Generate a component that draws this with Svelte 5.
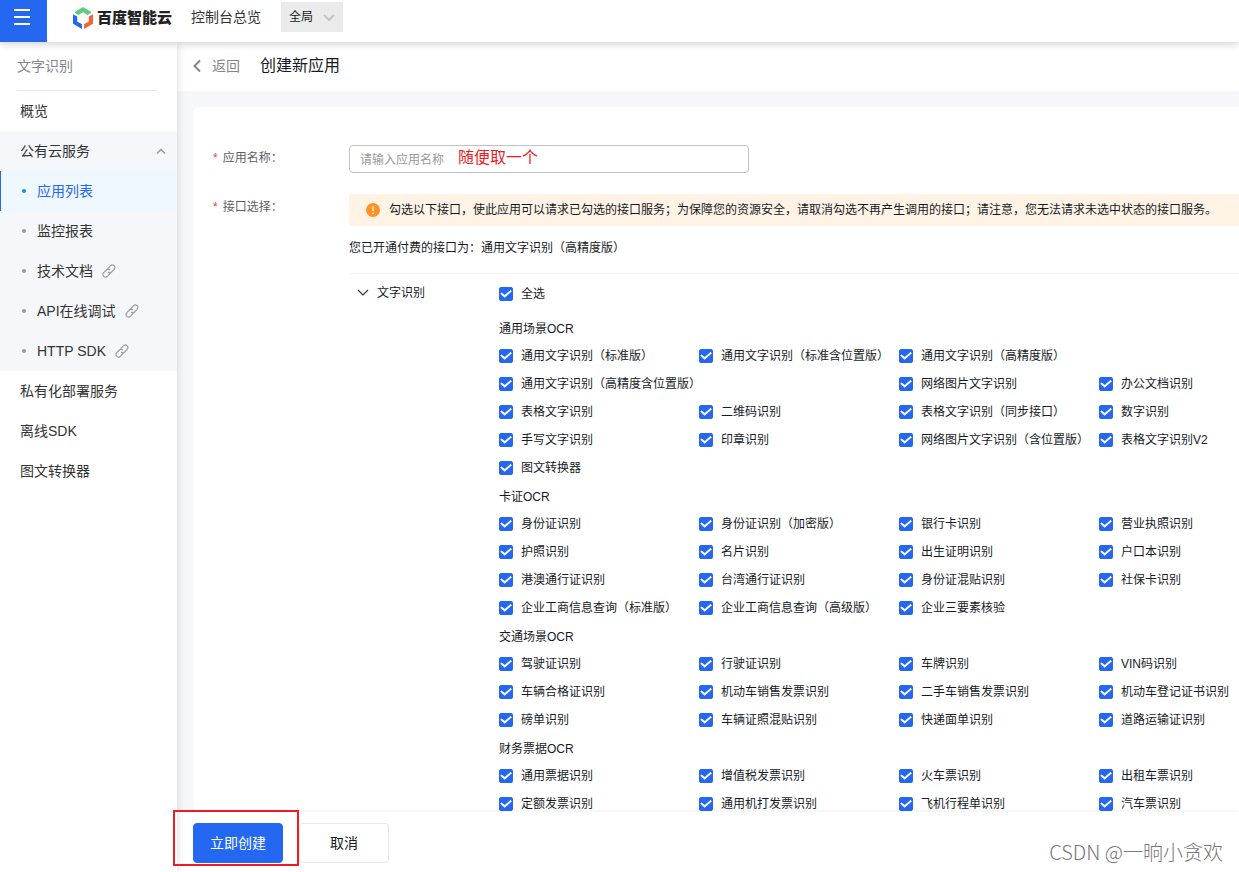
<script lang="ts">
  type Entry = { label: string; wide?: boolean };
  type Group = { title: string; entries: Entry[] };

  // Labels of 15 characters and more take two columns
  function entries(labels: string[]): Entry[] {
    return labels.map((label) => ({ label, wide: label.length > 14 }));
  }

  const groups: Group[] = [
    {
      title: '通用场景OCR',
      entries: entries([
        '通用文字识别（标准版）', '通用文字识别（标准含位置版）', '通用文字识别（高精度版）',
        '通用文字识别（高精度含位置版）', '网络图片文字识别', '办公文档识别',
        '表格文字识别', '二维码识别', '表格文字识别（同步接口）', '数字识别',
        '手写文字识别', '印章识别', '网络图片文字识别（含位置版）', '表格文字识别V2',
        '图文转换器',
      ]),
    },
    {
      title: '卡证OCR',
      entries: entries([
        '身份证识别', '身份证识别（加密版）', '银行卡识别', '营业执照识别',
        '护照识别', '名片识别', '出生证明识别', '户口本识别',
        '港澳通行证识别', '台湾通行证识别', '身份证混贴识别', '社保卡识别',
        '企业工商信息查询（标准版）', '企业工商信息查询（高级版）', '企业三要素核验',
      ]),
    },
    {
      title: '交通场景OCR',
      entries: entries([
        '驾驶证识别', '行驶证识别', '车牌识别', 'VIN码识别',
        '车辆合格证识别', '机动车销售发票识别', '二手车销售发票识别', '机动车登记证书识别',
        '磅单识别', '车辆证照混贴识别', '快递面单识别', '道路运输证识别',
      ]),
    },
    {
      title: '财务票据OCR',
      entries: entries([
        '通用票据识别', '增值税发票识别', '火车票识别', '出租车票识别',
        '定额发票识别', '通用机打发票识别', '飞机行程单识别', '汽车票识别',
      ]),
    },
  ];

  const subItems = [
    { label: '应用列表', active: true, link: false },
    { label: '监控报表', active: false, link: false },
    { label: '技术文档', active: false, link: true },
    { label: 'API在线调试', active: false, link: true },
    { label: 'HTTP SDK', active: false, link: true },
  ];
</script>

<div class="console">
  <header class="topbar">
    <button class="menu-btn" aria-label="菜单">
      <svg width="18" height="18" viewBox="0 0 18 18">
        <path d="M1 2h16M1 9h16M1 16h16" stroke="#fff" stroke-width="2" />
      </svg>
    </button>
    <a class="brand" href="#home">
      <svg width="20" height="22" viewBox="0 0 20 22">
        <path d="M2 4.8 10 0l8 4.8V6l-3.5 2L10 5.2 5.5 8 2 6z" fill="#5fcb83" />
        <path d="M0 7.2l4.2 2.3v5L9 17.3V22l-9-5.2z" fill="#2468f2" />
        <path d="M20 7.2l-4.2 2.3v5L11 17.3V22l9-5.2z" fill="#f2633a" />
      </svg>
      <span>百度智能云</span>
    </a>
    <a class="overview" href="#overview">控制台总览</a>
    <div class="region">
      <select aria-label="区域">
        <option>全局</option>
      </select>
      <svg width="12" height="8" viewBox="0 0 12 8">
        <path d="M1 1l5 5 5-5" fill="none" stroke="#c3c5c9" stroke-width="2" />
      </svg>
    </div>
  </header>

  <div class="body">
    <nav class="sidebar">
      <h2>文字识别</h2>
      <a class="item" href="#summary">概览</a>
      <div class="submenu">
        <button class="item toggle">
          公有云服务
          <svg width="10" height="6" viewBox="0 0 10 6">
            <path d="M1 5.5l4-4 4 4" fill="none" stroke="#999" stroke-width="1.5" />
          </svg>
        </button>
        {#each subItems as item}
          <a class="item sub" class:active={item.active} href="#sub">
            <i class="dot"></i>
            {item.label}
            {#if item.link}
              <svg class="link" width="14" height="14" viewBox="0 0 14 14">
                <g fill="none" stroke="#999" stroke-width="1.1" stroke-linecap="round">
                  <path d="M6 4.3l2.4-2.5a2.5 2.5 0 0 1 3.8 3.6L9.6 8a2.4 2.4 0 0 1-3.2.2" />
                  <path d="M8 9.7l-2.4 2.5a2.5 2.5 0 0 1-3.8-3.6L4.4 6a2.4 2.4 0 0 1 3.2-.2" />
                </g>
              </svg>
            {/if}
          </a>
        {/each}
      </div>
      <a class="item" href="#private">私有化部署服务</a>
      <a class="item" href="#offline">离线SDK</a>
      <a class="item" href="#converter">图文转换器</a>
    </nav>

    <main>
      <div class="page-head">
        <a class="back" href="#back">
          <svg width="8" height="14" viewBox="0 0 8 14">
            <path d="M7 1.5L1.5 7 7 12.5" fill="none" stroke="#84868c" stroke-width="2" />
          </svg>
          返回
        </a>
        <h1>创建新应用</h1>
      </div>

      <div class="scroll">
        <form class="card" id="create-app">
          <div class="row">
            <label class="label" for="app-name"><em>*</em>应用名称：</label>
            <div class="name-field">
              <input id="app-name" type="text" placeholder="请输入应用名称" />
              <span class="note">随便取一个</span>
            </div>
          </div>

          <div class="row">
            <span class="label"><em>*</em>接口选择：</span>
            <div class="field">
              <div class="alert">
                <svg width="14" height="14" viewBox="0 0 14 14">
                  <circle cx="7" cy="7" r="7" fill="#ff9326" />
                  <path d="M7 3v5M7 9.5v1.5" stroke="#fff3e6" stroke-width="1.4" />
                </svg>
                勾选以下接口，使此应用可以请求已勾选的接口服务；为保障您的资源安全，请取消勾选不再产生调用的接口；请注意，您无法请求未选中状态的接口服务。
              </div>
              <p class="paid">您已开通付费的接口为：通用文字识别（高精度版）</p>
              <div class="apis">
                <button type="button" class="fold">
                  <svg width="12" height="8" viewBox="0 0 12 8">
                    <path d="M1 1l5 5 5-5" fill="none" stroke="#303540" stroke-width="1.2" />
                  </svg>
                  文字识别
                </button>
                <div class="lists">
                  <label class="check all"><input type="checkbox" checked />全选</label>
                  {#each groups as group}
                    <fieldset>
                      <legend>{group.title}</legend>
                      <div class="grid">
                        {#each group.entries as entry}
                          <label class="check" class:wide={entry.wide}>
                            <input type="checkbox" checked />{entry.label}
                          </label>
                        {/each}
                      </div>
                    </fieldset>
                  {/each}
                </div>
              </div>
            </div>
          </div>
        </form>
      </div>

      <footer>
        <div class="submit">
          <button class="primary" type="submit" form="create-app">立即创建</button>
          <span class="marker"></span>
        </div>
        <button class="cancel" type="button">取消</button>
        <span class="watermark">CSDN @一晌小贪欢</span>
      </footer>
    </main>
  </div>
</div>

<style>
  :global(body) {
    margin: 0;
    font-family: 'Liberation Sans', 'Noto Sans CJK SC', sans-serif;
    font-size: 12px;
    line-height: 20px;
    color: #151b26;
  }

  .console {
    display: flex;
    flex-direction: column;
    height: 100vh;
    overflow: hidden;
    background: #f6f7f9;
  }

  .console * {
    box-sizing: border-box;
  }

  a {
    color: inherit;
    text-decoration: none;
  }

  button,
  input,
  select {
    margin: 0;
    font: inherit;
    color: inherit;
  }

  button {
    cursor: pointer;
  }

  svg {
    flex: none;
  }

  .topbar {
    position: relative;
    z-index: 3;
    flex: none;
    display: flex;
    height: 42px;
    background: #fff;
    box-shadow: 0 2px 8px rgba(0, 0, 0, 0.18);
  }

  .menu-btn {
    width: 47px;
    padding: 0 3px 8px 0;
    border: 0;
    background: #2468f2;
  }

  .menu-btn svg {
    display: block;
    margin: 0 auto;
  }

  .brand {
    display: flex;
    align-items: center;
    gap: 4px;
    height: 35px;
    margin-left: 26px;
    font-size: 15px;
    font-weight: 900;
    color: #222;
  }

  .overview {
    height: 34px;
    margin-left: 19px;
    font-size: 14px;
    line-height: 34px;
    color: #333;
  }

  .region {
    position: relative;
    width: 62px;
    height: 30px;
    margin: 2px 0 0 20px;
  }

  .region select {
    width: 100%;
    height: 100%;
    padding: 0 8px;
    border: 0;
    border-radius: 0;
    background: #ebebeb;
    appearance: none;
  }

  .region svg {
    position: absolute;
    top: 12px;
    right: 8px;
    pointer-events: none;
  }

  .body {
    flex: 1;
    display: flex;
    min-height: 0;
  }

  .sidebar {
    position: relative;
    z-index: 1;
    flex: none;
    width: 177px;
    background: #fff;
    box-shadow: 1px 0 8px rgba(0, 0, 0, 0.12);
    font-size: 14px;
  }

  .sidebar h2 {
    margin: 0 20px 0 17px;
    border-bottom: 1px solid #e8e9eb;
    font-size: 14px;
    font-weight: 400;
    line-height: 48px;
    color: #84868c;
  }

  .item {
    display: flex;
    align-items: center;
    width: 100%;
    height: 40px;
    padding: 0 11px 0 20px;
    border: 0;
    background: none;
    color: #333;
  }

  .toggle {
    justify-content: space-between;
  }

  .submenu {
    background: #f5f7fa;
  }

  .sub {
    padding-left: 22px;
  }

  .dot {
    width: 4px;
    height: 4px;
    margin-right: 11px;
    border-radius: 50%;
    background: #999;
  }

  .link {
    margin-left: 9px;
  }

  .active {
    background: #f0f8ff;
    box-shadow: inset 1px 0 #2468f2;
    color: #2468f2;
  }

  .active .dot {
    background: #108cee;
  }

  main {
    flex: 1;
    display: flex;
    flex-direction: column;
    min-width: 0;
  }

  .page-head {
    flex: none;
    display: flex;
    align-items: center;
    gap: 20px;
    height: 49px;
    padding: 0 16px 2px;
    background: #fff;
  }

  .back {
    display: flex;
    align-items: center;
    gap: 11px;
    font-size: 14px;
    color: #84868c;
  }

  h1 {
    margin: 0;
    font-size: 16px;
    font-weight: 400;
  }

  .scroll {
    flex: 1;
    min-height: 0;
    padding: 16px 0 0 16px;
    overflow: hidden auto;
    scrollbar-width: none;
  }

  .card {
    padding: 38px 0 40px 20px;
    border-radius: 6px 0 0 0;
    background: #fff;
  }

  .row {
    display: flex;
    margin-bottom: 21px;
  }

  .label {
    flex: none;
    width: 136px;
    line-height: 26px;
    color: #5c5f66;
  }

  .label em {
    margin-right: 5px;
    font-style: normal;
    color: #f33e3e;
  }

  .name-field {
    position: relative;
    width: 400px;
  }

  .name-field input {
    display: block;
    width: 100%;
    height: 28px;
    padding: 1px 10px 0;
    border: 1px solid #c0c2c6;
    border-radius: 4px;
    background: #fff;
  }

  .name-field input::placeholder {
    color: #999;
  }

  .note {
    position: absolute;
    top: 0;
    left: 109px;
    font-size: 16px;
    line-height: 26px;
    color: #ed1c24;
    pointer-events: none;
  }

  .field {
    flex: 1;
    min-width: 0;
  }

  .alert {
    display: flex;
    align-items: center;
    gap: 9px;
    height: 32px;
    padding-left: 17px;
    border-radius: 4px 0 0 4px;
    background: #fff3e6;
    white-space: nowrap;
  }

  .paid {
    margin: 12px 0 15px;
  }

  .apis {
    display: flex;
    align-items: flex-start;
    padding-top: 6px;
    border-top: 1px solid #f0f1f2;
  }

  .fold {
    flex: none;
    display: flex;
    align-items: center;
    gap: 8px;
    width: 150px;
    height: 26px;
    padding: 0 0 0 8px;
    border: 0;
    background: none;
  }

  .check {
    display: flex;
    align-items: center;
    gap: 8px;
    height: 28px;
    white-space: nowrap;
  }

  .all {
    margin-bottom: 6px;
  }

  .wide {
    grid-column: span 2;
  }

  .check input {
    flex: none;
    display: grid;
    place-items: center;
    width: 14px;
    height: 14px;
    border: 1px solid #b8babf;
    border-radius: 2px;
    appearance: none;
  }

  .check input:checked {
    border-color: #2468f2;
    background: #2468f2;
  }

  .check input:checked::before {
    content: '';
    width: 12px;
    height: 8px;
    background: #fff;
    clip-path: polygon(2% 46%, 14% 30%, 39% 64%, 88% 0, 99% 15%, 39% 98%);
  }

  fieldset {
    margin: 0;
    padding: 0;
    border: 0;
  }

  legend {
    padding: 2px 0 0;
    line-height: 26px;
  }

  .grid {
    display: grid;
    grid-template-columns: repeat(4, 200px);
  }

  footer {
    position: relative;
    flex: none;
    display: flex;
    align-items: center;
    gap: 16px;
    height: 60px;
    padding: 2px 16px 0;
    background: #fff;
    box-shadow: 0 -1px 4px rgba(0, 0, 0, 0.06);
    font-size: 14px;
  }

  .submit {
    position: relative;
  }

  .primary,
  .cancel {
    display: block;
    width: 90px;
    height: 40px;
    padding: 0;
    border: 1px solid #e8e9eb;
    border-radius: 4px;
    background: #fff;
  }

  .primary {
    border-color: #2468f2;
    background: #2468f2;
    color: #fff;
  }

  .marker {
    position: absolute;
    z-index: 2;
    inset: -13px -16px -3px -20px;
    border: 2px solid #ed1c24;
    pointer-events: none;
  }

  .watermark {
    margin: 18px 0 0 auto;
    font-family: 'Noto Sans CJK SC', sans-serif;
    font-size: 20px;
    font-weight: 300;
    color: #777;
  }
</style>
